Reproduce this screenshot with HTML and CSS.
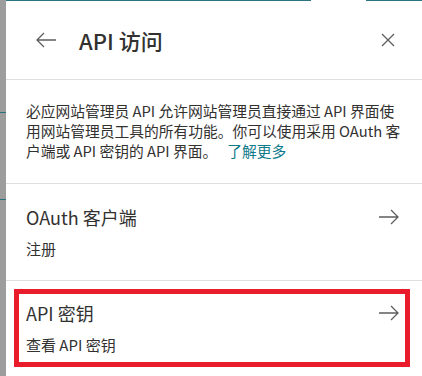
FILE: index.html
```html
<!DOCTYPE html>
<html lang="zh-CN">
<head>
<meta charset="utf-8">
<link rel="stylesheet" href="styles.css">
</head>
<body>
<div class="page">
  <div class="backdrop-strip">
    <div class="strip-line l1"></div>
    <div class="strip-line l2"></div>
  </div>
  <div class="panel">
    <div class="topline"><span class="seg a"></span><span class="seg gap"></span><span class="seg b"></span></div>
    <header class="header">
      <svg class="icon back" width="22" height="16" viewBox="0 0 22 16"><path d="M21 8H2M9 1L2 8l7 7" fill="none" stroke="#605e5c" stroke-width="1.3"/></svg>
      <h1 class="title">API 访问</h1>
      <svg class="icon close" width="14" height="14" viewBox="0 0 14 14"><path d="M1 1l12 12M13 1L1 13" fill="none" stroke="#605e5c" stroke-width="1.3"/></svg>
    </header>
    <section class="desc">
      <p>必应网站管理员 API 允许网站管理员直接通过 API 界面使用网站管理员工具的所有功能。你可以使用采用 OAuth 客户端或 API 密钥的 API 界面。<a class="link" href="#">了解更多</a></p>
    </section>
    <div class="item">
      <div class="item-text">
        <div class="item-title">OAuth 客户端</div>
        <div class="item-sub">注册</div>
      </div>
      <svg class="icon fwd" width="22" height="16" viewBox="0 0 22 16"><path d="M1 8h19M13 1l7 7-7 7" fill="none" stroke="#605e5c" stroke-width="1.3"/></svg>
    </div>
    <div class="item last">
      <div class="item-text">
        <div class="item-title">API 密钥</div>
        <div class="item-sub">查看 API 密钥</div>
      </div>
      <svg class="icon fwd" width="22" height="16" viewBox="0 0 22 16"><path d="M1 8h19M13 1l7 7-7 7" fill="none" stroke="#605e5c" stroke-width="1.3"/></svg>
      <div class="highlight"></div>
    </div>
  </div>
</div>
</body>
</html>
```
FILE: styles.css
```css
html, body {
  margin: 0;
  padding: 0;
  background: #ffffff;
}
body {
  font-family: "Noto Sans CJK SC", sans-serif;
  color: #323130;
}
.page {
  display: flex;
  width: 422px;
  height: 376px;
  overflow: hidden;
}
.backdrop-strip {
  position: relative;
  width: 6px;
  flex: 0 0 6px;
  background: #9d9d9d;
}
.strip-line {
  position: absolute;
  left: 0;
  width: 6px;
  height: 1px;
  background: #2b6f7a;
}
.strip-line.l1 { top: 112px; }
.strip-line.l2 { top: 199px; }
.panel {
  position: relative;
  flex: 1;
  display: flex;
  flex-direction: column;
  background: #fff;
}
.topline {
  display: flex;
  height: 1px;
}
.seg.a { width: 305px; background: #2b7480; }
.seg.gap { width: 55px; background: #fff; }
.seg.b { flex: 1; background: #2b7480; }
.header {
  display: flex;
  align-items: center;
  height: 79px;
  padding: 0 22px 0 29px;
  border-bottom: 1px solid #e1dfdd;
}
.icon { display: block; flex: none; }
.back { margin-right: 22px; margin-top: 1px; }
.title {
  flex: 1;
  margin: 0;
  font-size: 22px;
  font-weight: 500;
  line-height: 28px;
  color: #323130;
}
.close { margin-right: 5px; }
.desc {
  padding: 21px 18px 22px 20px;
  border-bottom: 1px solid #e1dfdd;
}
.desc p {
  margin: 0;
  font-size: 14.75px;
  line-height: 20px;
  color: #323130;
}
.link {
  display: inline-block;
  margin-left: 10px;
  color: #0f7a8a;
  text-decoration: none;
}
.item {
  position: relative;
  display: flex;
  align-items: flex-start;
  padding: 21px 22px 21px 20px;
  border-bottom: 1px solid #e1dfdd;
}
.item.last { border-bottom: none; padding-top: 20px; }
.item-text { flex: 1; }
.item-title {
  font-size: 18px;
  line-height: 24px;
  color: #323130;
}
.item-sub {
  margin-top: 10px;
  font-size: 15px;
  line-height: 20px;
  color: #323130;
}
.fwd { margin-top: 4px; }
.highlight {
  position: absolute;
  left: 8px;
  top: 8px;
  width: 386px;
  height: 68px;
  border: 5px solid #e81c2a;
}
```
